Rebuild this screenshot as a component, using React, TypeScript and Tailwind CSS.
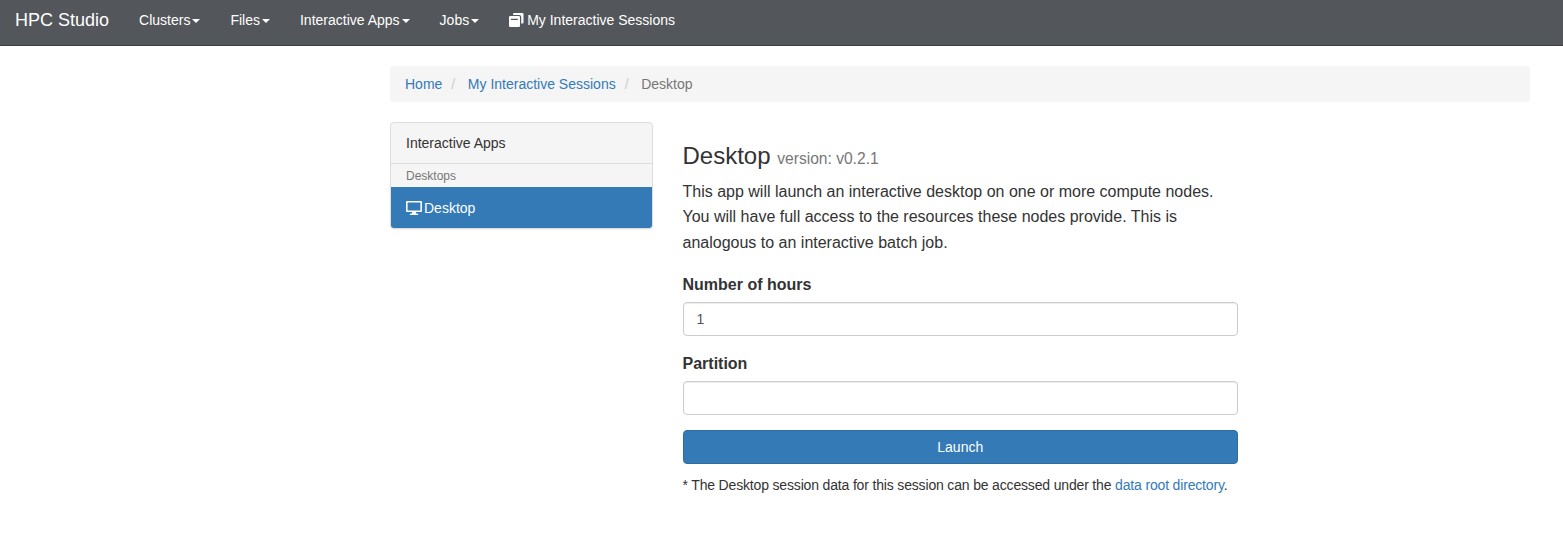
import React from "react";

const Caret = () => (
  <span className="ml-0.5 inline-block border-x-4 border-t-4 border-x-transparent border-t-white align-middle" />
);

const menus = ["Clusters", "Files", "Interactive Apps", "Jobs"];

function SessionsIcon() {
  return (
    <svg className="h-[15px] w-4" viewBox="0 0 16 15" fill="#fff">
      <path d="M5.2 0H13.3Q14.5 0 14.5 1.2V9.4Q14.5 10.6 13.3 10.6H12.2V4Q12.2 2 10.2 2H4V1.2Q4 0 5.2 0Z" />
      <path fillRule="evenodd" d="M1.2 3H9.8Q11 3 11 4.2V12.8Q11 14 9.8 14H1.2Q0 14 0 12.8V4.2Q0 3 1.2 3ZM2 5.8V7H8.8V5.8Z" />
    </svg>
  );
}

function MonitorIcon() {
  return (
    <svg className="h-[15px] w-4" viewBox="0 0 16 15" fill="#fff">
      <path fillRule="evenodd" d="M1 0H15Q16 0 16 1V10Q16 11 15 11H10V12.5H11.3Q12.3 12.5 12.3 14H3.7Q3.7 12.5 4.7 12.5H6V11H1Q0 11 0 10V1Q0 0 1 0ZM1.6 1.5V9.5H14.4V1.5Z" />
    </svg>
  );
}

function Field({ label, value }: { label: string; value: string }) {
  return (
    <div className="mb-[15px]">
      <label className="mb-[5px] block text-[16px] leading-[25px] font-bold">{label}</label>
      <input
        aria-label={label}
        defaultValue={value}
        className="block h-[34px] w-full rounded-[4px] border border-[#ccc] bg-white px-[13px] py-1.5 text-[14px] leading-5 text-[#555] shadow-[inset_0_1px_1px_rgba(0,0,0,0.075)] outline-none"
      />
    </div>
  );
}

export default function App() {
  return (
    <div className="min-h-[551px] bg-white font-['Liberation_Sans',Arial,sans-serif] text-[14px] leading-5 text-[#333]">
      <nav className="flex h-[46px] items-start border-b border-[#3b3d40] bg-[#53565a] text-white">
        <a className="px-[15px] pt-[10px] text-[18px] leading-5">HPC Studio</a>
        {menus.map((m) => (
          <a key={m} className="px-[15px] pt-[10px] whitespace-nowrap">
            {m}
            <Caret />
          </a>
        ))}
        <a className="flex px-[15px] pt-[10px] whitespace-nowrap">
          <span className="mt-[3px] mr-0.5">
            <SessionsIcon />
          </span>
          My Interactive Sessions
        </a>
      </nav>

      <div className="ml-[390px] w-[1140px] pt-5">
        <ol className="mb-5 flex h-9 items-center rounded-[4px] bg-[#f5f5f5] px-[15px]">
          <li className="text-[#337ab7]">Home</li>
          <li className="flex text-[#337ab7]">
            <span className="mr-[12.6px] ml-[9px] text-[#ccc]">/</span>My Interactive Sessions
          </li>
          <li className="flex text-[#777]">
            <span className="mr-[12.6px] ml-[9px] text-[#ccc]">/</span>Desktop
          </li>
        </ol>

        <div className="flex items-start">
          <aside className="w-[263px] overflow-hidden rounded-[4px] border border-[#ddd] bg-[#f5f5f5] shadow-[0_1px_1px_rgba(0,0,0,0.05)]">
            <div className="h-[41px] border-b border-[#ddd] px-[15px] py-[10px]">Interactive Apps</div>
            <div className="h-[23px] px-[15px] pt-[2px] text-[12px] text-[#777]">Desktops</div>
            <div className="flex h-[41px] bg-[#337ab7] px-[15px] pt-[11px] text-white">
              <span className="mt-[3px] mr-0.5">
                <MonitorIcon />
              </span>
              Desktop
            </div>
          </aside>

          <main className="ml-[29.5px] w-[555.5px] pt-[21px]">
            <h3 className="mb-[9.6px] text-[24px] leading-[26px]">
              Desktop <small className="text-[15.6px] leading-none text-[#777]">version: v0.2.1</small>
            </h3>
            <p className="mb-[16.2px] text-[16px] leading-[25.6px]">
              This app will launch an interactive desktop on one or more compute nodes. You will have full access to the
              resources these nodes provide. This is analogous to an interactive batch job.
            </p>
            <form onSubmit={(e) => e.preventDefault()}>
              <Field label="Number of hours" value="1" />
              <Field label="Partition" value="" />
              <button className="block h-[34px] w-full rounded-[4px] border border-[#2e6da4] bg-[#337ab7] text-[14px] leading-5 text-white">
                Launch
              </button>
            </form>
            <p className="mt-[11px] text-[14px] tracking-[-0.165px] whitespace-nowrap">
              * The Desktop session data for this session can be accessed under the{" "}
              <a className="text-[#337ab7]">data root directory</a>.
            </p>
          </main>
        </div>
      </div>
    </div>
  );
}
